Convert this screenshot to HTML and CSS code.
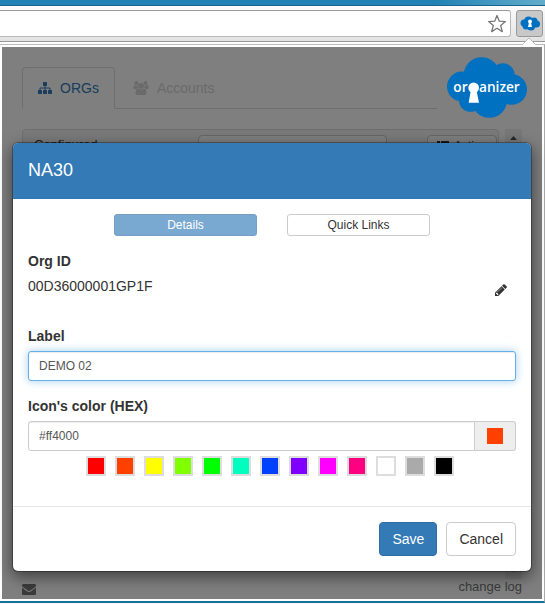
FILE: index.html
```html
<!DOCTYPE html>
<html lang="en">
<head>
    <meta charset="UTF-8">
    <meta name="viewport" content="width=device-width, initial-scale=1.0">
    <title>Organizer</title>
    <link rel="stylesheet" href="styles.css">
</head>
<body>
    <div class="titlebar"></div>
    <div class="toolbar">
        <div class="address">
            <input type="text" class="address-input" aria-label="Address">
            <button type="button" class="star" aria-label="Bookmark">
                <svg width="20" height="20" viewBox="0 0 20 20"><path d="M10 1.500l2.300 5.700 6.100.4-4.700 4 1.600 6-5.300-3.300-5.300 3.300 1.600-6-4.700-4 6.100-.4z" fill="#fff" stroke="#777" stroke-width="1.300" stroke-linejoin="round"/></svg>
            </button>
        </div>
        <button type="button" class="extension" aria-label="Organizer">
            <svg width="20" height="15" viewBox="0 0 40 30">
                <g fill="#0070c0">
                    <circle cx="17" cy="10" r="9"/><circle cx="28" cy="10" r="7"/><circle cx="8" cy="14" r="7"/>
                    <circle cx="33" cy="16" r="7"/><circle cx="12" cy="20" r="7"/><circle cx="22" cy="20" r="9"/>
                </g>
                <circle cx="20" cy="11" r="4" fill="#fff"/><path d="M18 13h4l2 9h-8z" fill="#fff"/>
            </svg>
        </button>
    </div>

    <div class="popup">
        <svg class="popup-arrow" width="14" height="7" viewBox="0 0 14 7"><path d="M0 7L7 0l7 7z" fill="#fff"/><path d="M0 7L7 0l7 7" fill="none" stroke="#bbb"/></svg>

        <div class="page">
            <div class="page-header">
                <nav class="tabs">
                    <a href="#orgs" class="tab active">
                        <svg width="14" height="14" viewBox="0 0 1792 1792" fill="currentColor"><path d="M1792 1248v320q0 40-28 68t-68 28h-320q-40 0-68-28t-28-68v-320q0-40 28-68t68-28h96v-192h-512v192h96q40 0 68 28t28 68v320q0 40-28 68t-68 28h-320q-40 0-68-28t-28-68v-320q0-40 28-68t68-28h96v-192h-512v192h96q40 0 68 28t28 68v320q0 40-28 68t-68 28h-320q-40 0-68-28t-28-68v-320q0-40 28-68t68-28h96v-192q0-52 38-90t90-38h512v-192h-96q-40 0-68-28t-28-68v-320q0-40 28-68t68-28h320q40 0 68 28t28 68v320q0 40-28 68t-68 28h-96v192h512q52 0 90 38t38 90v192h96q40 0 68 28t28 68z"/></svg>
                        ORGs
                    </a>
                    <a href="#accounts" class="tab">
                        <svg width="16" height="14" viewBox="0 0 2048 1792" fill="currentColor"><path d="M657 896q-162 5-265 128h-134q-82 0-138-40.500t-56-118.500q0-353 124-353 6 0 43.500 21t97.500 42.500 119 21.500q67 0 133-23-5 37-5 66 0 159 93 292zm1071 637q0 120-73 189.500t-194 69.500h-874q-121 0-194-69.500t-73-189.500q0-53 3.500-103.500t14-109 26.500-108.500 43-97.500 62-81 85.500-53.500 111.500-20q10 0 43 21.500t73 48 107 48 135 21.500 135-21.500 107-48 73-48 43-21.500q61 0 111.500 20t85.500 53.500 62 81 43 97.500 26.500 108.500 14 109 3.500 103.500zm-1024-1277q0 106-75 181t-181 75-181-75-75-181 75-181 181-75 181 75 75 181zm704 384q0 159-112.500 271.500t-271.500 112.500-271.500-112.500-112.500-271.500 112.500-271.500 271.500-112.500 271.500 112.500 112.500 271.500zm576 225q0 78-56 118.500t-138 40.500h-134q-103-123-265-128 93-133 93-292 0-29-5-66 66 23 133 23 59 0 119-21.500t97.500-42.500 43.500-21q124 0 124 353zm-128-609q0 106-75 181t-181 75-181-75-75-181 75-181 181-75 181 75 75 181z"/></svg>
                        Accounts
                    </a>
                </nav>
                <svg class="logo" width="80" height="61" viewBox="141 171 240 182">
                    <g fill="#0070c0">
                        <circle cx="245" cy="225" r="54"/><circle cx="308" cy="225" r="36"/><circle cx="186" cy="259" r="45"/>
                        <circle cx="335" cy="268" r="46"/><circle cx="212" cy="300" r="35"/><circle cx="268" cy="300" r="53"/>
                    </g>
                    <g class="logo-text" fill="#fff"><text x="160" y="275">or</text><text x="237" y="275">anizer</text></g>
                    <circle cx="221" cy="263" r="16" fill="#fff"/><path d="M212 273h18l7 35h-31z" fill="#fff"/>
                </svg>
            </div>

            <div class="list">
                <div class="panel">
                    <label for="search" class="panel-label">Configured</label>
                    <input type="text" id="search" class="panel-search">
                    <button type="button" class="panel-action">
                        <svg width="12" height="12" viewBox="0 0 12 12" fill="currentColor"><path d="M0 1h3v3H0zM4 1h8v3H4zM0 5h3v2H0zM4 5h8v2H4zM0 8h3v3H0zM4 8h8v3H4z"/></svg>
                        Actions
                    </button>
                </div>
                <div class="scrollbar">
                    <svg width="7" height="4" viewBox="0 0 7 4"><path d="M0 4h7L3.500 0z" fill="#505050"/></svg>
                    <svg width="7" height="4" viewBox="0 0 7 4"><path d="M0 0h7L3.500 4z" fill="#505050"/></svg>
                </div>
            </div>

            <div class="page-footer">
                <a href="#contact" aria-label="Contact">
                    <svg class="mail-icon" width="14" height="14" viewBox="0 0 1792 1792" fill="currentColor"><path d="M1792 710v794q0 66-47 113t-113 47h-1472q-66 0-113-47t-47-113v-794q44 49 101 87 362 246 497 345 57 42 92.500 65.500t94.500 48 110 24.500h2q51 0 110-24.500t94.500-48 92.500-65.500q170-123 498-345 57-39 100-87zm0-294q0 79-49 151t-122 123q-376 261-468 325-10 7-42.500 31t-54 38.500-52 32.500-57.500 27-50 9h-2q-23 0-50-9t-57.500-27-52-32.500-54-38.500-42.500-31q-91-64-262-182.500t-205-142.500q-62-42-117-115.500t-55-136.500q0-78 41.500-130t118.500-52h1472q65 0 112.500 47t47.500 113z"/></svg>
                </a>
                <a href="#changelog">change log</a>
            </div>
        </div>

        <div class="overlay">
            <form class="modal">
                <div class="modal-header">
                    <h4>NA30</h4>
                </div>

                <div class="modal-body">
                    <div class="modal-tabs">
                        <button type="button" class="btn btn-xs btn-primary selected">Details</button>
                        <button type="button" class="btn btn-xs">Quick Links</button>
                    </div>

                    <div class="org-id">
                        <h5>Org ID</h5>
                        <div class="org-id-row">
                            <span>00D36000001GP1F</span>
                            <button type="button" class="edit" aria-label="Edit">
                                <svg width="14" height="14" viewBox="0 0 1792 1792" fill="currentColor"><path d="M491 1536l91-91-235-235-91 91v107h128v128h107zm523-928q0-22-22-22-10 0-17 7l-542 542q-7 7-7 17 0 22 22 22 10 0 17-7l542-542q7-7 7-17zm-54-192l416 416-832 832h-416v-416zm683 96q0 53-37 90l-166 166-416-416 166-165q36-38 90-38 53 0 91 38l235 234q37 39 37 91z"/></svg>
                            </button>
                        </div>
                    </div>

                    <div class="form-group">
                        <label for="label">Label</label>
                        <input type="text" id="label" class="form-control focused" value="DEMO 02">
                    </div>

                    <div class="form-group">
                        <label for="color">Icon's color (HEX)</label>
                        <div class="input-group">
                            <input type="text" id="color" class="form-control" value="#ff4000">
                            <span class="addon"><span class="preview"></span></span>
                        </div>
                        <div class="swatches">
                            <button type="button" class="swatch red" aria-label="Red"></button>
                            <button type="button" class="swatch orange" aria-label="Orange"></button>
                            <button type="button" class="swatch yellow" aria-label="Yellow"></button>
                            <button type="button" class="swatch lime" aria-label="Lime"></button>
                            <button type="button" class="swatch green" aria-label="Green"></button>
                            <button type="button" class="swatch aqua" aria-label="Aqua"></button>
                            <button type="button" class="swatch blue" aria-label="Blue"></button>
                            <button type="button" class="swatch purple" aria-label="Purple"></button>
                            <button type="button" class="swatch magenta" aria-label="Magenta"></button>
                            <button type="button" class="swatch pink" aria-label="Pink"></button>
                            <button type="button" class="swatch white" aria-label="White"></button>
                            <button type="button" class="swatch gray" aria-label="Gray"></button>
                            <button type="button" class="swatch black" aria-label="Black"></button>
                        </div>
                    </div>
                </div>

                <div class="modal-footer">
                    <button type="submit" class="btn btn-primary">Save</button>
                    <button type="button" class="btn">Cancel</button>
                </div>
            </form>
        </div>
    </div>
</body>
</html>
```
FILE: styles.css
```css
* {
    box-sizing: border-box;
}

body {
    margin: 0;
    font-family: Arial, "Liberation Sans", sans-serif;
    font-size: 14px;
    line-height: 20px;
    color: #333;
    background-color: #fff;
}

button, input {
    font-family: inherit;
    margin: 0;
}

svg {
    display: block;
    flex: none;
}

/* Browser bar */
.titlebar {
    height: 6px;
    background: linear-gradient(to right, #2181b4 80%, #63adcb);
    border-bottom: 1px solid #17648d;
}

.toolbar {
    display: flex;
    gap: 5px;
    padding: 4px 2px 4px 0;
    background: linear-gradient(#fcfcfc, #e2e2e2);
    border-bottom: 1px solid #999;
}

.address {
    flex: 1;
    display: flex;
    align-items: center;
    height: 27px;
    background-color: #fff;
    border: 1px solid #b8b8b8;
    border-top-color: #999;
    border-left: none;
    border-radius: 0 3px 3px 0;
}

.address-input {
    flex: 1;
    min-width: 0;
    border: none;
    background: none;
    outline: none;
}

.star {
    padding: 0 3px 0 0;
    border: none;
    background: none;
}

.extension {
    display: flex;
    align-items: center;
    justify-content: center;
    width: 27px;
    height: 27px;
    padding: 0;
    background-color: #c8c8c8;
    border: 1px solid #999;
    border-radius: 3px;
}

/* Popup: the page and the overlay share one grid cell */
.popup {
    position: relative;
    display: grid;
    margin-top: 2px;
    padding: 2px;
    background-color: #fff;
    border-top: 1px solid #bbb;
    border-right: 1px solid #aaa;
    border-bottom: 2px solid #177393;
}

.popup-arrow {
    position: absolute;
    top: -7px;
    right: 8px;
}

.page, .overlay {
    grid-area: 1 / 1;
    min-width: 0;
}

.page {
    display: flex;
    flex-direction: column;
    padding: 10px 15px 0 20px;
}

.page-header {
    display: flex;
    align-items: flex-start;
    gap: 10px;
}

.tabs {
    flex: 1;
    display: flex;
    gap: 2px;
    margin-top: 10px;
    border-bottom: 1px solid #ddd;
}

.tab {
    display: flex;
    align-items: center;
    gap: 8px;
    padding: 10px 15px;
    border: 1px solid transparent;
    border-radius: 4px 4px 0 0;
    margin-bottom: -1px;
    color: #d5d5d5;
    text-decoration: none;
}

.tab.active {
    color: #337ab7;
    background-color: #fff;
    border-color: #ddd;
    border-bottom-color: #fff;
}

.logo {
    position: relative;
    z-index: 2;
}

.logo-text {
    font-family: "Open Sans", sans-serif;
    font-size: 41px;
    font-weight: 600;
}

.list {
    flex: 1;
    display: flex;
    gap: 6px;
    margin: 11px 5px 0 0;
}

.panel {
    flex: 1;
    display: flex;
    align-items: flex-start;
    margin-bottom: 20px;
    padding: 5px 1px 0 11px;
    background-color: #f5f5f5;
    border: 1px solid #ddd;
    border-radius: 4px;
}

.panel-label {
    width: 164px;
    font-size: 13px;
    line-height: 20px;
}

.panel-search {
    flex: 1;
    min-width: 0;
    height: 30px;
    margin-right: 40px;
    background-color: #fff;
    border: 1px solid #ccc;
    border-radius: 4px;
}

.panel-action {
    display: flex;
    align-items: center;
    gap: 5px;
    width: 70px;
    height: 22px;
    padding: 0 9px;
    font-size: 12px;
    color: #333;
    background-color: #fff;
    border: 1px solid #ccc;
    border-radius: 4px;
}

.scrollbar {
    display: flex;
    flex-direction: column;
    align-items: center;
    justify-content: space-between;
    width: 17px;
    padding: 7px 0;
    background-color: #f1f1f1;
}

.page-footer {
    display: flex;
    justify-content: space-between;
    align-items: flex-start;
    height: 20px;
    margin-right: 5px;
    font-size: 13px;
    line-height: 16px;
}

.page-footer a {
    color: #777;
    text-decoration: none;
}

.mail-icon {
    margin-top: 3px;
}

/* Modal */
.overlay {
    position: relative;
    z-index: 1;
    padding: 95px 10px 27px;
    background-color: rgba(0, 0, 0, 0.5);
}

.modal {
    background-color: #fff;
    background-clip: padding-box;
    border: 1px solid rgba(0, 0, 0, 0.3);
    border-radius: 6px;
    box-shadow: 0 5px 15px rgba(0, 0, 0, 0.5);
}

.modal-header {
    padding: 14px 15px 16px;
    color: #fff;
    background-color: #337ab7;
    border-radius: 5px 5px 0 0;
}

.modal-header h4 {
    margin: 0;
    font-size: 18px;
    font-weight: normal;
    line-height: 26px;
}

.modal-body {
    padding: 15px;
}

.modal-tabs {
    display: flex;
    justify-content: center;
    gap: 30px;
    margin-bottom: 15px;
}

.btn {
    padding: 6px 12px;
    font-size: 14px;
    line-height: 20px;
    color: #333;
    background-color: #fff;
    border: 1px solid #ccc;
    border-radius: 4px;
    cursor: pointer;
}

.btn-primary {
    color: #fff;
    background-color: #337ab7;
    border-color: #2e6da4;
}

.btn-xs {
    width: 143px;
    padding: 1px 5px;
    font-size: 12px;
    line-height: 18px;
    border-radius: 3px;
}

.selected {
    opacity: 0.65;
}

.org-id {
    margin-bottom: 30px;
}

.org-id h5 {
    margin: 0 0 5px;
    font-size: 14px;
    line-height: 20px;
}

.org-id-row {
    display: flex;
    justify-content: space-between;
    height: 20px;
}

.edit {
    padding: 7px 8px 0;
    border: none;
    background: none;
    color: #333;
    cursor: pointer;
}

.form-group {
    margin-bottom: 15px;
}

.form-group label {
    display: block;
    margin-bottom: 5px;
    font-weight: bold;
}

.form-control {
    display: block;
    width: 100%;
    height: 30px;
    padding: 5px 10px;
    font-size: 12px;
    line-height: 18px;
    color: #555;
    background-color: #fff;
    border: 1px solid #ccc;
    border-radius: 3px;
    box-shadow: inset 0 1px 1px rgba(0, 0, 0, 0.075);
}

.form-control.focused {
    border-color: #66afe9;
    outline: none;
    box-shadow: inset 0 1px 1px rgba(0, 0, 0, 0.075), 0 0 8px rgba(102, 175, 233, 0.6);
}

.input-group {
    display: flex;
}

.input-group .form-control {
    flex: 1;
    min-width: 0;
    border-radius: 3px 0 0 3px;
}

.addon {
    display: flex;
    align-items: center;
    padding: 0 12px;
    background-color: #eee;
    border: 1px solid #ccc;
    border-left: none;
    border-radius: 0 3px 3px 0;
}

.preview {
    width: 16px;
    height: 16px;
    background-color: #ff4000;
}

.swatches {
    display: flex;
    justify-content: center;
    gap: 9px;
    margin: 5px 4px 0 0;
}

.swatch {
    width: 20px;
    height: 20px;
    padding: 0;
    border: 2px solid #ddd;
    cursor: pointer;
}

.red { background-color: #ff0000; }
.orange { background-color: #ff4000; }
.yellow { background-color: #ffff00; }
.lime { background-color: #80ff00; }
.green { background-color: #00ff00; }
.aqua { background-color: #00ffbf; }
.blue { background-color: #0040ff; }
.purple { background-color: #8000ff; }
.magenta { background-color: #ff00ff; }
.pink { background-color: #ff0080; }
.white { background-color: #ffffff; }
.gray { background-color: #aaaaaa; }
.black { background-color: #000000; }

.modal-footer {
    display: flex;
    justify-content: flex-end;
    gap: 9px;
    padding: 15px;
    border-top: 1px solid #e5e5e5;
}
```
